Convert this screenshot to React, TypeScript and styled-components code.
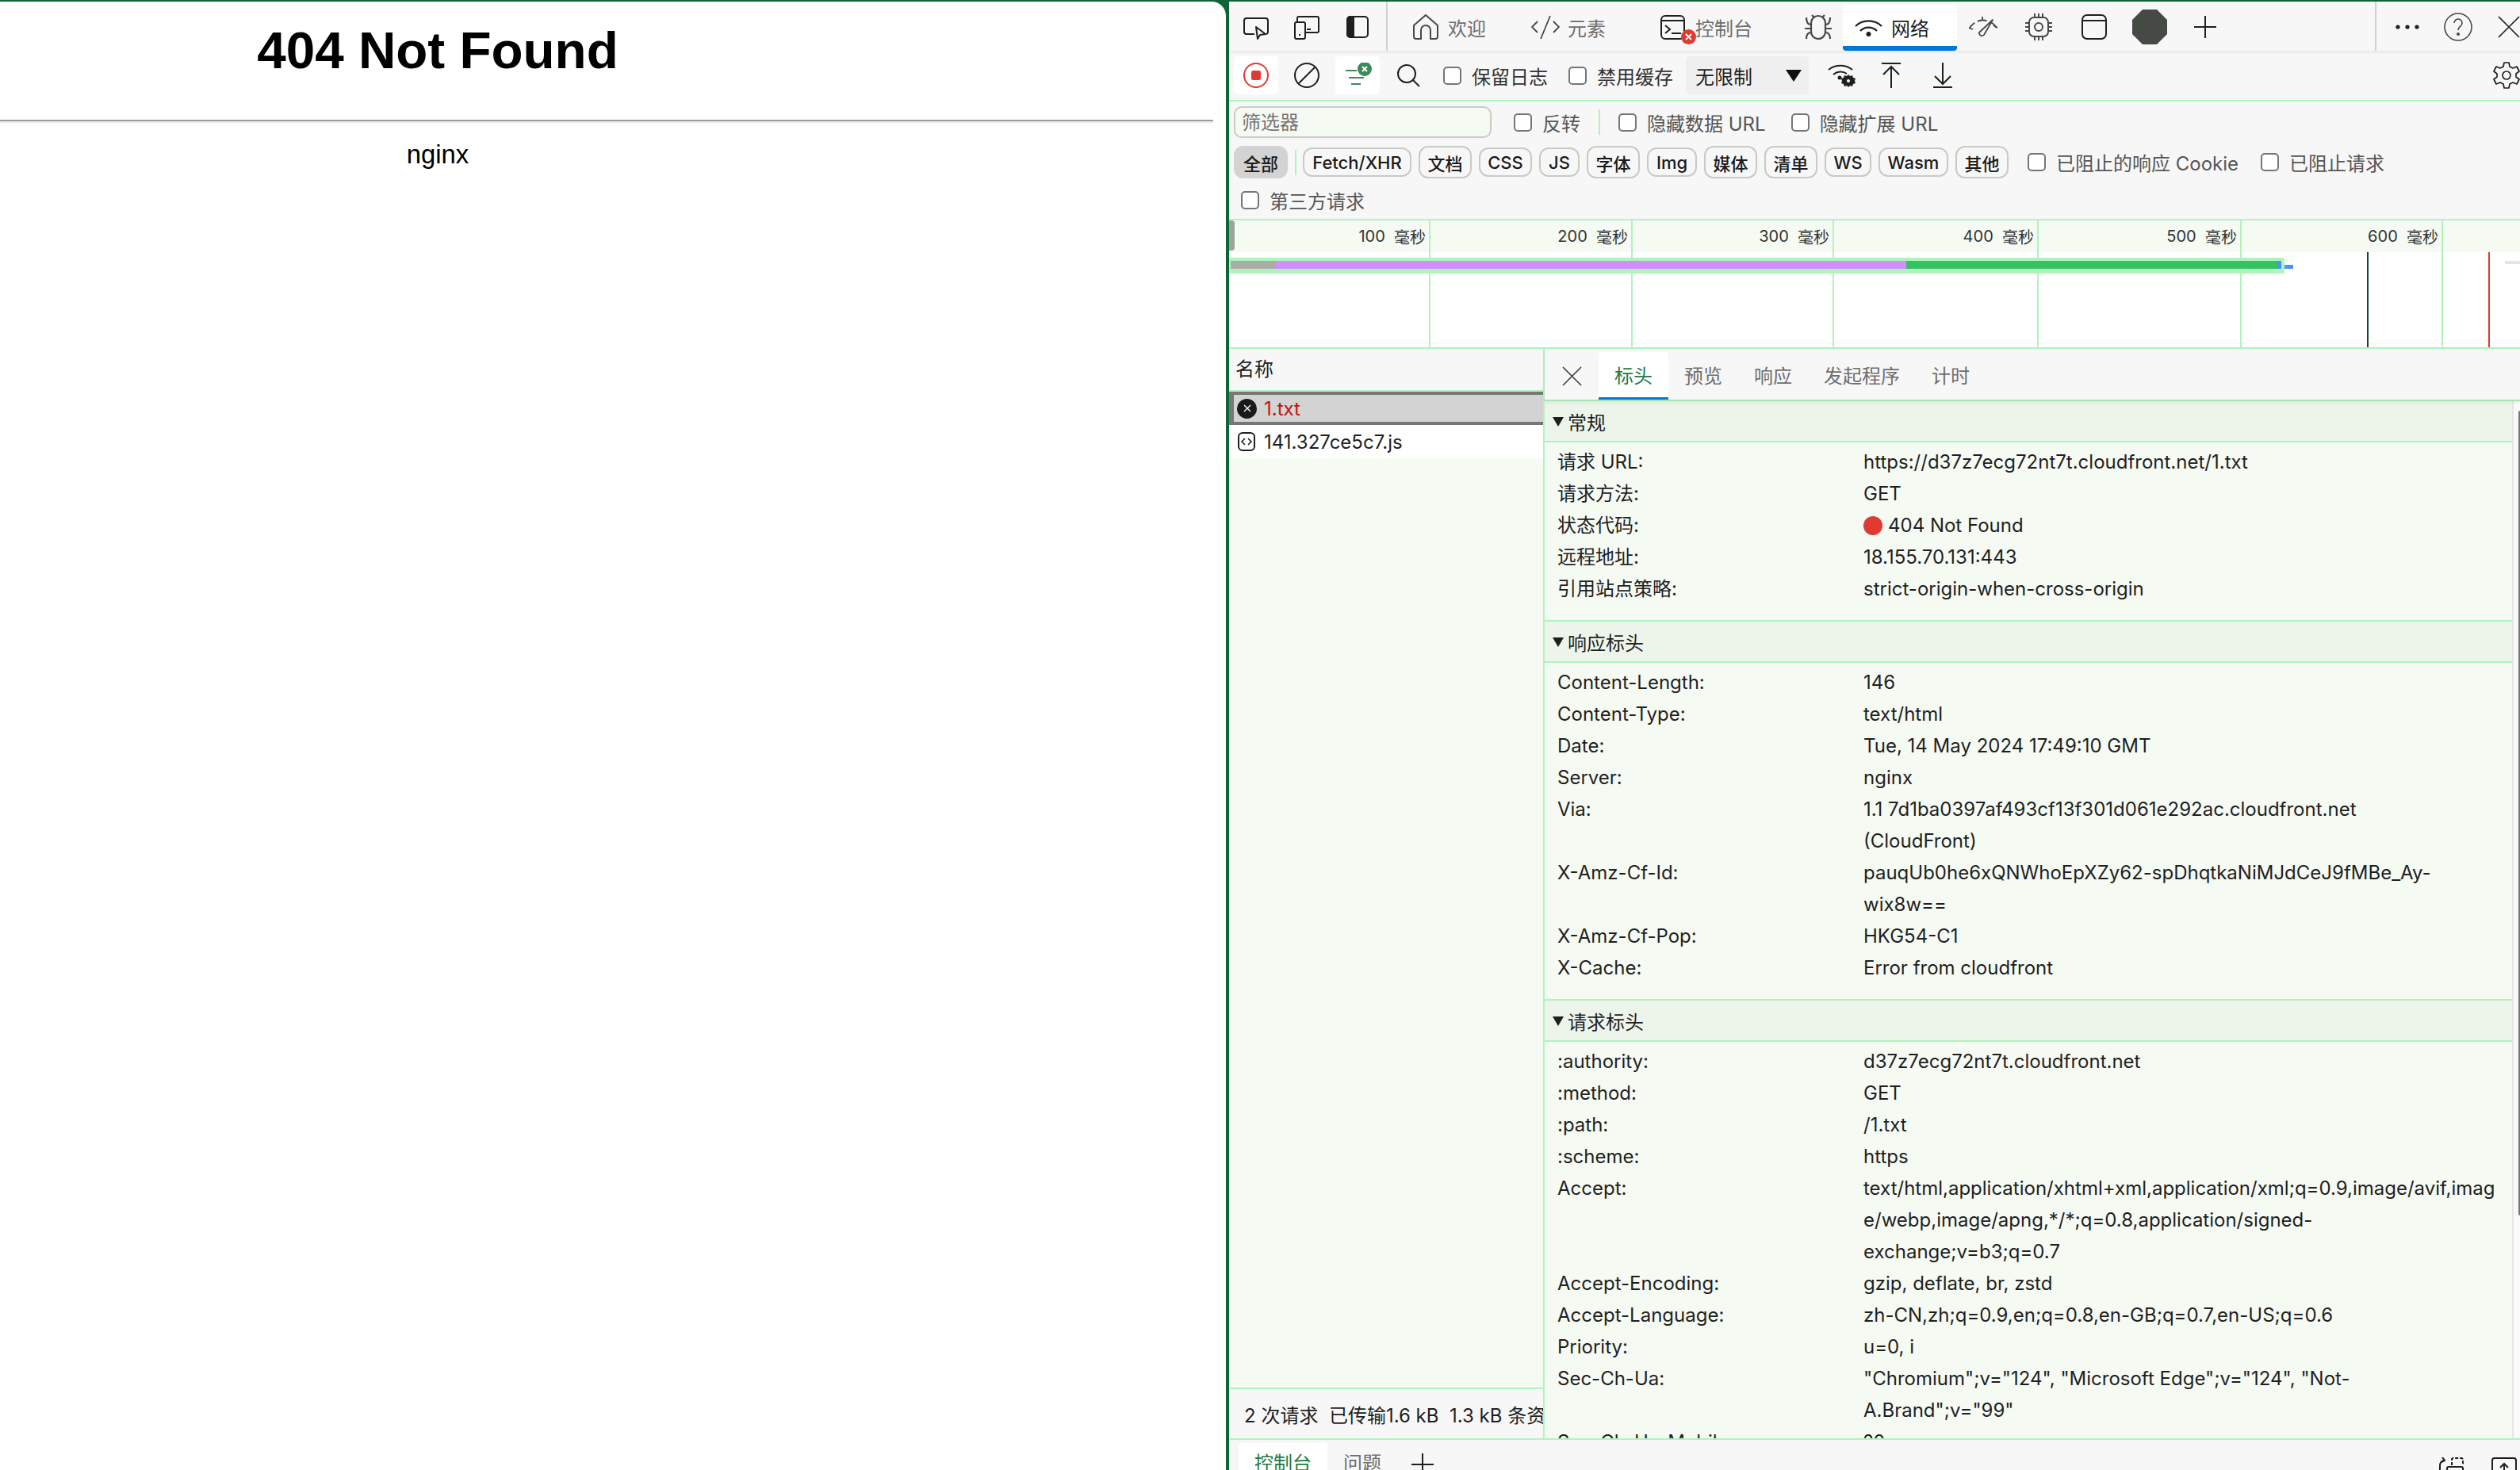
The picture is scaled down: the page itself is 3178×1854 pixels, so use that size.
import React from 'react';
import styled, { createGlobalStyle } from 'styled-components';

const SANS = '"Inter", "Noto Sans CJK SC", sans-serif';
const GREEN_LINE = '#aef4bc';
const PANE_BG = '#f5faf3';
const TOOLBAR_BG = '#f7f7f7';

const GlobalStyle = createGlobalStyle`
  html, body {
    margin: 0;
    padding: 0;
    background: #0f6435;
  }
  * {
    box-sizing: border-box;
  }
`;

function Icon ({ w, h, children, sw = 2 }: { w: number, h: number, children: React.ReactNode, sw?: number }) {
  return (
    <svg width={w} height={h} viewBox={`0 0 ${w} ${h}`} fill='none' stroke='currentColor' strokeWidth={sw} style={{ flex: 'none', display: 'block' }}>
      {children}
    </svg>
  );
}

const InspectIcon = () => (
  <Icon w={32} h={28}>
    <path d='M14 21H4a3 3 0 0 1-3-3V4a3 3 0 0 1 3-3h24a3 3 0 0 1 3 3v14a3 3 0 0 1-2 3' />
    <path d='M16 12l12 9-7 1-3 5z' strokeLinejoin='round' />
  </Icon>
);
const DeviceIcon = () => (
  <Icon w={32} h={30}>
    <path d='M4 7V3a2 2 0 0 1 2-2h23a2 2 0 0 1 2 2v16a2 2 0 0 1-2 2H15' />
    <rect x='1' y='8' width='13' height='21' rx='2' />
    <path d='M6 24h2M16 17h5' />
  </Icon>
);
const SidebarIcon = () => (
  <Icon w={28} h={28}>
    <rect x='1' y='1' width='26' height='26' rx='4' />
    <path d='M1 5a4 4 0 0 1 4-4h4v26H5a4 4 0 0 1-4-4z' fill='currentColor' />
  </Icon>
);
const HomeIcon = () => (
  <Icon w={32} h={33}>
    <path d='M1 14L16 1l15 13v14a3 3 0 0 1-3 3h-6V20a6 6 0 0 0-12 0v11H4a3 3 0 0 1-3-3z' strokeLinejoin='round' />
  </Icon>
);
const CodeIcon = () => (
  <Icon w={36} h={31} sw={1.8}>
    <path d='M8 8L1 15l7 7M28 8l7 7-7 7M24 1L12 30' />
  </Icon>
);
const ConsoleIcon = () => (
  <Icon w={32} h={31}>
    <rect x='1' y='1' width='29' height='29' rx='5' />
    <path d='M1 7h29M6 13l6 5-6 5M14 23h12' />
  </Icon>
);
const BugIcon = () => (
  <Icon w={34} h={32} sw={2.2}>
    <path d='M8 11a9 9 0 0 1 18 0v11a9 9 0 0 1-18 0z' />
    <path d='M12 4L9 1M22 4l3-3M8 13C4 13 2 10 2 4M26 13c4 0 6-3 6-9M8 18H0M26 18h8M8 23c-4 0-6 3-6 8M26 23c4 0 6 3 6 8' />
  </Icon>
);
const WifiIcon = () => (
  <Icon w={35} h={24} sw={2.2}>
    <path d='M1 11a24 24 0 0 1 33 0M7 17a15 15 0 0 1 21 0' />
    <circle cx='17.5' cy='21' r='3' fill='currentColor' stroke='none' />
  </Icon>
);
const GaugeIcon = () => (
  <Icon w={38} h={26} sw={1.8}>
    <path d='M2 14A20 20 0 0 1 36 14' strokeDasharray='9 4 12 4 30' />
    <path d='M31 4L20 23a3.500 3.500 0 0 1-6-3z' strokeLinejoin='round' />
    <path d='M18 0v5M1 14l5 2M37 14l-5-3' />
  </Icon>
);
const ChipIcon = () => (
  <Icon w={36} h={36}>
    <rect x='6' y='6' width='24' height='24' rx='6' />
    <circle cx='18' cy='18' r='5' />
    <path d='M13 1v5M18 1v5M23 1v5M13 30v5M18 30v5M23 30v5M1 13h5M1 18h5M1 23h5M30 13h5M30 18h5M30 23h5' />
  </Icon>
);
const WindowIcon = () => (
  <Icon w={32} h={32}>
    <rect x='1' y='1' width='30' height='30' rx='6' />
    <path d='M1 8h30' />
  </Icon>
);
const Octagon = () => (
  <svg width={44} height={44} viewBox='0 0 44 44' style={{ flex: 'none', display: 'block' }}>
    <path d='M13 0h18l13 13v18L31 44H13L0 31V13z' fill='#464a45' />
  </svg>
);
const PlusIcon = ({ s = 28 }: { s?: number }) => (
  <Icon w={s} h={s}>
    <path d={`M${s / 2} 0v${s}M0 ${s / 2}h${s}`} />
  </Icon>
);
const DotsIcon = () => (
  <svg width={30} height={6} viewBox='0 0 30 6' fill='currentColor' style={{ flex: 'none', display: 'block' }}>
    <circle cx='3' cy='3' r='2.6' /><circle cx='15' cy='3' r='2.6' /><circle cx='27' cy='3' r='2.6' />
  </svg>
);
const HelpIcon = () => (
  <Icon w={36} h={36} sw={1.6}>
    <circle cx='18' cy='18' r='17' />
    <path d='M13 13a5 5 0 1 1 8 4c-2 1.500-3 2.500-3 5' />
    <circle cx='18' cy='27' r='1.200' fill='currentColor' />
  </Icon>
);
const CloseIcon = ({ s = 28 }: { s?: number }) => (
  <Icon w={s} h={s} sw={1.7}>
    <path d={`M1 1L${s - 1} ${s - 1}M${s - 1} 1L1 ${s - 1}`} />
  </Icon>
);
const RecordIcon = () => (
  <svg width={32} height={32} viewBox='0 0 32 32' style={{ display: 'block' }}>
    <circle cx='16' cy='16' r='15' fill='none' stroke='#e03a32' strokeWidth='2' />
    <rect x='10' y='10' width='12' height='12' rx='2.500' fill='#e03a32' />
  </svg>
);
const ClearIcon = () => (
  <Icon w={32} h={32}>
    <circle cx='16' cy='16' r='15' />
    <path d='M27 5L5 27' />
  </Icon>
);
const FilterIcon = () => (
  <svg width={46} height={32} viewBox='0 0 46 32' style={{ display: 'block' }}>
    <path d='M8 10h14M12 19h19M15 27h12' stroke='#3a8a5a' strokeWidth='2' fill='none' />
    <circle cx='32' cy='8' r='9' fill='#3a8a5a' />
    <path d='M29 5l6 6M35 5l-6 6' stroke='#fff' strokeWidth='2' />
  </svg>
);
const SearchIcon = () => (
  <Icon w={29} h={29}>
    <circle cx='12' cy='12' r='11' />
    <path d='M20 20l8 8' />
  </Icon>
);
const WifiGearIcon = () => (
  <svg width={35} height={32} viewBox='0 0 35 32' fill='none' stroke='currentColor' strokeWidth='2' style={{ flex: 'none', display: 'block' }}>
    <path d='M1 9a24 24 0 0 1 30 0M7 15a14 14 0 0 1 17-1' />
    <circle cx='15' cy='19' r='2.500' fill='currentColor' stroke='none' />
    <path d='M26 15l2 2 3-1 1 3 3 1-1 3 1 3-3 1-1 3-3-1-2 2-2-2-3 1-1-3-3-1 1-3-1-3 3-1 1-3 3 1z' fill='currentColor' stroke='none' />
    <circle cx='26' cy='23' r='2' fill='#f7f7f7' stroke='none' />
  </svg>
);
const UploadIcon = () => (
  <Icon w={24} h={32}>
    <path d='M0 1h24M12 32V5M2 15L12 5l10 10' />
  </Icon>
);
const DownloadIcon = () => (
  <Icon w={24} h={32}>
    <path d='M0 31h24M12 0v27M2 17l10 10 10-10' />
  </Icon>
);
const GearIcon = () => (
  <Icon w={34} h={34} sw={1.7}>
    <path d='M14 1h6l1 5 4 2 5-2 3 6-4 3v4l4 3-3 6-5-2-4 2-1 5h-6l-1-5-4-2-5 2-3-6 4-3v-4L1 12l3-6 5 2 4-2z' strokeLinejoin='round' />
    <circle cx='17' cy='17' r='5' />
  </Icon>
);
const FileIcon = () => (
  <Icon w={22} h={24}>
    <rect x='1' y='1' width='20' height='22' rx='5' />
    <path d='M9 8l-4 4 4 4M13 8l4 4-4 4' strokeWidth='1.600' />
  </Icon>
);
const DockIcon = () => (
  <Icon w={32} h={16}>
    <path d='M7 4a7 7 0 0 0-5 7v5M5 0l3 4-4 2' />
    <path d='M17 10V3a2 2 0 0 1 2-2h10a2 2 0 0 1 2 2v7' strokeDasharray='4 2' />
    <path d='M11 16v-2a2 2 0 0 1 2-2h16a2 2 0 0 1 2 2v2' />
  </Icon>
);
const ScreenIcon = () => (
  <Icon w={32} h={16}>
    <path d='M1 16V4a3 3 0 0 1 3-3h24a3 3 0 0 1 3 3v12M16 16V8M11 13l5-5 5 5' />
  </Icon>
);

const PILLS = [
  { label: '全部', w: 68, active: true, cjk: true },
  { label: 'Fetch/XHR', w: 137 },
  { label: '文档', w: 67, cjk: true },
  { label: 'CSS', w: 67 },
  { label: 'JS', w: 51 },
  { label: '字体', w: 67, cjk: true },
  { label: 'Img', w: 63 },
  { label: '媒体', w: 67, cjk: true },
  { label: '清单', w: 67, cjk: true },
  { label: 'WS', w: 59 },
  { label: 'Wasm', w: 88 },
  { label: '其他', w: 67, cjk: true }
];

const SECTIONS = [
  {
    title: '常规',
    rows: [
      ['请求 URL:', 'https://d37z7ecg72nt7t.cloudfront.net/1.txt'],
      ['请求方法:', 'GET'],
      ['状态代码:', '404 Not Found', 'status'],
      ['远程地址:', '18.155.70.131:443'],
      ['引用站点策略:', 'strict-origin-when-cross-origin']
    ]
  },
  {
    title: '响应标头',
    rows: [
      ['Content-Length:', '146'],
      ['Content-Type:', 'text/html'],
      ['Date:', 'Tue, 14 May 2024 17:49:10 GMT'],
      ['Server:', 'nginx'],
      ['Via:', '1.1 7d1ba0397af493cf13f301d061e292ac.cloudfront.net\n(CloudFront)'],
      ['X-Amz-Cf-Id:', 'pauqUb0he6xQNWhoEpXZy62-spDhqtkaNiMJdCeJ9fMBe_Ay-\nwix8w=='],
      ['X-Amz-Cf-Pop:', 'HKG54-C1'],
      ['X-Cache:', 'Error from cloudfront']
    ]
  },
  {
    title: '请求标头',
    rows: [
      [':authority:', 'd37z7ecg72nt7t.cloudfront.net'],
      [':method:', 'GET'],
      [':path:', '/1.txt'],
      [':scheme:', 'https'],
      ['Accept:', 'text/html,application/xhtml+xml,application/xml;q=0.9,image/avif,imag\ne/webp,image/apng,*/*;q=0.8,application/signed-\nexchange;v=b3;q=0.7'],
      ['Accept-Encoding:', 'gzip, deflate, br, zstd'],
      ['Accept-Language:', 'zh-CN,zh;q=0.9,en;q=0.8,en-GB;q=0.7,en-US;q=0.6'],
      ['Priority:', 'u=0, i'],
      ['Sec-Ch-Ua:', '"Chromium";v="124", "Microsoft Edge";v="124", "Not-\nA.Brand";v="99"'],
      ['Sec-Ch-Ua-Mobile:', '?0']
    ]
  }
];

const TICKS = [
  { label: '100', w: 254 },
  { label: '200', w: 255 },
  { label: '300', w: 254 },
  { label: '400', w: 258 },
  { label: '500', w: 256 },
  { label: '600', w: 254 }
];

export default function App () {
  return (
    <Screen>
      <GlobalStyle />

      <Page>
        <Heading>404 Not Found</Heading>
        <Rule />
        <Footer>nginx</Footer>
      </Page>

      <DevTools>
        <MainTabs>
          <IconCell $mt={4}><InspectIcon /></IconCell>
          <IconCell $mt={2}><DeviceIcon /></IconCell>
          <IconCell><SidebarIcon /></IconCell>
          <VLine $ml={4} />
          <MainTab $ml={32}><HomeIcon />欢迎</MainTab>
          <MainTab $ml={57} $gap={10}><CodeIcon />元素</MainTab>
          <MainTab $ml={69} $dark>
            <ConsoleIcon />
            <ErrorBadge>
              <svg width={9} height={9} viewBox='0 0 9 9'><path d='M1 1l7 7M8 1L1 8' stroke='#fff' strokeWidth='1.800' /></svg>
            </ErrorBadge>
            控制台
          </MainTab>
          <MainTab $ml={66}><BugIcon /></MainTab>
          <NetworkTab><WifiIcon />网络</NetworkTab>
          <MainTab $ml={14}><GaugeIcon /></MainTab>
          <MainTab $ml={33}><ChipIcon /></MainTab>
          <MainTab $ml={36} $dark><WindowIcon /></MainTab>
          <MainTab $ml={32}><Octagon /></MainTab>
          <MainTab $ml={34} $dark><PlusIcon /></MainTab>
          <Spacer />
          <VLine />
          <MainTab $ml={24} $dark><DotsIcon /></MainTab>
          <MainTab $ml={31}><HelpIcon /></MainTab>
          <MainTab $ml={32} $dark><CloseIcon /></MainTab>
        </MainTabs>

        <Toolbar>
          <ToolButton $on $ml={6}><RecordIcon /></ToolButton>
          <ToolButton $ml={20} $w={32}><ClearIcon /></ToolButton>
          <ToolButton $on $ml={20}><FilterIcon /></ToolButton>
          <ToolButton $ml={22} $w={29}><SearchIcon /></ToolButton>
          <CheckLabel $ml={29} $dark><Check type='checkbox' readOnly />保留日志</CheckLabel>
          <CheckLabel $ml={26} $dark><Check type='checkbox' readOnly />禁用缓存</CheckLabel>
          <Throttle>无限制<Caret /></Throttle>
          <ToolButton $ml={24} $w={35}><WifiGearIcon /></ToolButton>
          <ToolButton $ml={33} $w={24}><UploadIcon /></ToolButton>
          <ToolButton $ml={41} $w={24}><DownloadIcon /></ToolButton>
          <Spacer />
          <GearIcon />
        </Toolbar>

        <FilterBar>
          <FilterRow>
            <FilterInput placeholder='筛选器' readOnly />
            <CheckLabel $ml={28}><Check type='checkbox' readOnly />反转</CheckLabel>
            <GreenSep $ml={23} $h={32} />
            <CheckLabel $ml={23}><Check type='checkbox' readOnly />隐藏数据 URL</CheckLabel>
            <CheckLabel $ml={32}><Check type='checkbox' readOnly />隐藏扩展 URL</CheckLabel>
          </FilterRow>

          <PillRow>
            {PILLS.map((pill, i) => (
              <React.Fragment key={pill.label}>
                <Pill $active={pill.active} $cjk={pill.cjk} $w={pill.w}>{pill.label}</Pill>
                {i === 0 && <GreenSep $ml={0} $h={32} />}
              </React.Fragment>
            ))}
            <CheckLabel $ml={15}><Check type='checkbox' readOnly />已阻止的响应 Cookie</CheckLabel>
            <CheckLabel $ml={20}><Check type='checkbox' readOnly />已阻止请求</CheckLabel>
          </PillRow>

          <ThirdPartyRow>
            <CheckLabel><Check type='checkbox' readOnly />第三方请求</CheckLabel>
          </ThirdPartyRow>
        </FilterBar>

        <Timeline>
          <Handle />
          <TickRow>
            {TICKS.map(tick => (
              <Tick key={tick.label} $w={tick.w}>
                <span>{tick.label}</span>&nbsp;&nbsp;毫秒
              </Tick>
            ))}
          </TickRow>
          <svg width={1628} height={120} viewBox='0 0 1628 120' style={{ display: 'block', background: '#fff' }}>
            {[253, 508, 762, 1020, 1276, 1530].map(x => (
              <rect key={x} x={x - 1} y={0} width={2} height={120} fill={GREEN_LINE} />
            ))}
            <rect x={1435} y={0} width={2} height={120} fill='#0a4a24' />
            <rect x={1588} y={0} width={2} height={120} fill='#e03a32' />
            <rect x={0} y={7} width={1331} height={20} fill={GREEN_LINE} />
            <rect x={2} y={11} width={56} height={10} fill='#a9ada5' />
            <rect x={58} y={11} width={796} height={10} fill='#d08eff' />
            <rect x={854} y={11} width={469} height={10} fill='#38c163' />
            <rect x={1323} y={11} width={4} height={10} fill='#4d90fe' />
            <rect x={1331} y={16} width={11} height={5} fill='#4d90fe' />
            <rect x={1609} y={11} width={19} height={4} fill='#e0e8dc' />
          </svg>
        </Timeline>

        <Split>
          <NameColumn>
            <NameHeader>名称</NameHeader>
            <SelectedRow>
              <ErrorDot>
                <svg width={10} height={10} viewBox='0 0 10 10'><path d='M1 1l8 8M9 1L1 9' stroke='#fff' strokeWidth='1.300' /></svg>
              </ErrorDot>
              <ErrorName>1.txt</ErrorName>
            </SelectedRow>
            <FileRow><FileIcon /><span>141.327ce5c7.js</span></FileRow>
            <NameFill />
            <StatusBar>2 次请求&nbsp;&nbsp;已传输1.6 kB&nbsp;&nbsp;1.3 kB 条资源</StatusBar>
          </NameColumn>

          <DetailPane>
            <DetailTabs>
              <DetailClose><CloseIcon s={25} /></DetailClose>
              <DetailTab $active>标头</DetailTab>
              <DetailTab>预览</DetailTab>
              <DetailTab>响应</DetailTab>
              <DetailTab>发起程序</DetailTab>
              <DetailTab>计时</DetailTab>
            </DetailTabs>
            <DetailBody>
              <Sections>
                {SECTIONS.map(section => (
                  <Section key={section.title}>
                    <SectionHeader><Triangle />{section.title}</SectionHeader>
                    <SectionRows>
                      {section.rows.map(([name, value, kind]) => (
                        <Row key={name}>
                          <RowName>{name}</RowName>
                          <RowValue>
                            {kind === 'status' && <StatusDot />}
                            {value}
                          </RowValue>
                        </Row>
                      ))}
                    </SectionRows>
                  </Section>
                ))}
              </Sections>
              <Scrollbar><ScrollThumb /></Scrollbar>
            </DetailBody>
          </DetailPane>
        </Split>

        <Drawer>
          <DrawerTab $active>控制台</DrawerTab>
          <DrawerTab>问题</DrawerTab>
          <DrawerPlus><PlusIcon /></DrawerPlus>
          <Spacer />
          <DrawerDock><DockIcon /></DrawerDock>
          <DrawerScreen><ScreenIcon /></DrawerScreen>
        </Drawer>
      </DevTools>
    </Screen>
  );
}

const Screen = styled.div`
  width: 3178px;
  height: 1854px;
  padding-top: 2px;
  display: flex;
  overflow: hidden;
  background: #0f6435;
  font-family: ${SANS};
  font-size: 24px;
  color: #1f1f1f;
`;

const Page = styled.div`
  flex: 0 0 1546px;
  background: #fff;
  border-top-right-radius: 18px;
  font-family: "Liberation Sans", Arial, sans-serif;
  color: #000;
`;

const Heading = styled.h1`
  width: 1104px;
  margin: 25px 0 0;
  text-align: center;
  font-size: 65.6px;
  line-height: 74px;
  font-weight: 700;
`;

const Rule = styled.hr`
  width: 1530px;
  height: 4px;
  margin: 50px 0 0;
  border: 0;
  border-top: 2px solid #9a9a9a;
  border-bottom: 2px solid #eee;
`;

const Footer = styled.div`
  width: 1104px;
  margin-top: 21px;
  text-align: center;
  font-size: 32.8px;
  line-height: 37px;
`;

const DevTools = styled.div`
  flex: 0 0 1628px;
  margin-left: 4px;
  display: flex;
  flex-direction: column;
  min-height: 0;
  background: ${TOOLBAR_BG};
`;

const MainTabs = styled.div`
  flex: 0 0 62px;
  padding-top: 2px;
  display: flex;
  align-items: center;
  color: #1f1f1f;
  box-shadow: 0 2px 4px rgba(0, 0, 0, .08);
  position: relative;
`;

const IconCell = styled.div<{ $mt?: number }>`
  flex: 0 0 64px;
  margin-top: ${p => p.$mt || 0}px;
  display: flex;
  justify-content: center;
  &:first-child {
    margin-left: 2px;
  }
`;

const VLine = styled.div<{ $ml?: number }>`
  flex: none;
  align-self: stretch;
  width: 2px;
  margin: -2px 0 0 ${p => p.$ml || 0}px;
  background: #cfcfd6;
`;

const MainTab = styled.div<{ $ml: number, $gap?: number, $dark?: boolean }>`
  flex: none;
  position: relative;
  display: flex;
  align-items: center;
  gap: ${p => p.$gap || 12}px;
  margin-left: ${p => p.$ml}px;
  color: #6e6e6e;
  & > svg {
    color: ${p => p.$dark ? '#1f1f1f' : '#484848'};
  }
`;

const ErrorBadge = styled.span`
  position: absolute;
  left: 26px;
  top: 20px;
  width: 19px;
  height: 19px;
  display: flex;
  align-items: center;
  justify-content: center;
  border-radius: 50%;
  background: #e03a32;
`;

const NetworkTab = styled.div`
  flex: none;
  align-self: flex-end;
  height: 58px;
  width: 144px;
  margin-left: 14px;
  padding: 4px 0 0 15px;
  display: flex;
  align-items: center;
  gap: 11px;
  background: #fff;
  border-bottom: 6px solid #0078d4;
  border-radius: 4px;
  color: #1f1f1f;
`;

const Spacer = styled.div`
  flex: 1;
`;

const Toolbar = styled.div`
  flex: 0 0 64px;
  display: flex;
  align-items: center;
  border-bottom: 2px solid ${GREEN_LINE};
`;

const ToolButton = styled.div<{ $on?: boolean, $ml: number, $w?: number }>`
  flex: none;
  width: ${p => p.$w || 56}px;
  height: 48px;
  margin-left: ${p => p.$ml}px;
  display: flex;
  align-items: center;
  justify-content: center;
  border-radius: 5px;
  background: ${p => p.$on ? '#fff' : 'transparent'};
`;

const CheckLabel = styled.label<{ $ml?: number, $dark?: boolean }>`
  flex: none;
  display: flex;
  align-items: center;
  gap: 13px;
  margin-left: ${p => p.$ml || 0}px;
  color: ${p => p.$dark ? '#333' : '#555'};
  white-space: nowrap;
`;

const Check = styled.input`
  appearance: none;
  flex: none;
  width: 23px;
  height: 23px;
  margin: 0;
  border: 2px solid #767676;
  border-radius: 5px;
  background: #fff;
`;

const Throttle = styled.div`
  flex: none;
  width: 155px;
  height: 48px;
  margin-left: 16px;
  padding: 0 9px 0 12px;
  display: flex;
  align-items: center;
  justify-content: space-between;
  border-radius: 5px;
  background: #efefef;
`;

const Caret = styled.span`
  width: 0;
  height: 0;
  border-left: 10.5px solid transparent;
  border-right: 10.5px solid transparent;
  border-top: 15px solid #111;
`;

const FilterBar = styled.div`
  flex: 0 0 150px;
  display: flex;
  flex-direction: column;
  border-bottom: 2px solid ${GREEN_LINE};
`;

const FilterRow = styled.div`
  flex: 0 0 52px;
  padding-left: 6px;
  display: flex;
  align-items: center;
`;

const FilterInput = styled.input`
  flex: none;
  width: 325px;
  height: 40px;
  padding: 0 8px;
  border: 2px solid #c8ccc4;
  border-radius: 10px;
  background: ${PANE_BG};
  font: inherit;
  &::placeholder {
    color: #757575;
  }
`;

const GreenSep = styled.div<{ $ml: number, $h: number }>`
  flex: none;
  width: 2px;
  height: ${p => p.$h}px;
  margin-left: ${p => p.$ml}px;
  background: ${GREEN_LINE};
`;

const PillRow = styled.div`
  flex: 0 0 41px;
  margin-top: 4px;
  padding-left: 6px;
  display: flex;
  align-items: center;
  gap: 8px;
`;

const Pill = styled.div<{ $active?: boolean, $cjk?: boolean, $w: number }>`
  flex: none;
  width: ${p => p.$w}px;
  height: ${p => p.$cjk ? 41 : 37}px;
  margin-right: 1px;
  display: flex;
  align-items: center;
  justify-content: center;
  border: 2px solid ${p => p.$active ? '#d3d3d3' : '#c8cbc3'};
  border-radius: 12px;
  background: ${p => p.$active ? '#d3d3d3' : 'transparent'};
  color: #1a1a1a;
  font-size: 22px;
  font-weight: 500;
  white-space: nowrap;
`;

const ThirdPartyRow = styled.div`
  flex: 1;
  padding: 3px 0 0 15px;
  display: flex;
  align-items: center;
`;

const Timeline = styled.div`
  flex: none;
  position: relative;
  border-bottom: 2px solid ${GREEN_LINE};
`;

const Handle = styled.div`
  position: absolute;
  left: 0;
  top: 0;
  width: 7px;
  height: 38px;
  border-radius: 0 4px 4px 0;
  background: #9aa69c;
`;

const TickRow = styled.div`
  height: 40px;
  display: flex;
  background: ${PANE_BG};
`;

const Tick = styled.div<{ $w: number }>`
  flex: 0 0 ${p => p.$w}px;
  padding-right: 4px;
  display: flex;
  align-items: center;
  justify-content: flex-end;
  border-right: 2px solid ${GREEN_LINE};
  font-size: 20px;
  color: #333;
`;

const Split = styled.div`
  flex: 1;
  min-height: 0;
  display: flex;
  border-bottom: 2px solid ${GREEN_LINE};
`;

const NameColumn = styled.div`
  flex: 0 0 398px;
  min-width: 0;
  display: flex;
  flex-direction: column;
  border-right: 2px solid ${GREEN_LINE};
`;

const NameHeader = styled.div`
  flex: 0 0 54px;
  padding: 0 0 5px 8px;
  display: flex;
  align-items: center;
  border-bottom: 2px solid ${GREEN_LINE};
`;

const SelectedRow = styled.div`
  flex: 0 0 42px;
  padding-left: 4px;
  display: flex;
  align-items: center;
  gap: 9px;
  border: solid #777;
  border-width: 4px 0 4px 6px;
  background: #d3d3d3;
`;

const ErrorDot = styled.span`
  flex: none;
  width: 25px;
  height: 25px;
  display: flex;
  align-items: center;
  justify-content: center;
  border-radius: 50%;
  background: #1a1a1a;
`;

const ErrorName = styled.span`
  color: #c5120f;
`;

const FileRow = styled.div`
  flex: 0 0 42px;
  padding-left: 11px;
  display: flex;
  align-items: center;
  gap: 11px;
  background: #fff;
`;

const NameFill = styled.div`
  flex: 1;
  background: ${PANE_BG};
`;

const StatusBar = styled.div`
  flex: 0 0 64px;
  padding: 0 0 0 19px;
  display: flex;
  align-items: center;
  border-top: 2px solid ${GREEN_LINE};
  white-space: nowrap;
  overflow: hidden;
`;

const DetailPane = styled.div`
  flex: 1;
  min-width: 0;
  display: flex;
  flex-direction: column;
`;

const DetailTabs = styled.div`
  flex: 0 0 66px;
  display: flex;
  align-items: flex-end;
  border-bottom: 2px solid #a8e4b4;
  box-shadow: 0 2px 4px rgba(0, 0, 0, .06);
  position: relative;
`;

const DetailClose = styled.div`
  flex: none;
  width: 68px;
  height: 60px;
  padding-left: 22px;
  display: flex;
  align-items: center;
  color: #444;
`;

const DetailTab = styled.div<{ $active?: boolean }>`
  flex: none;
  height: 60px;
  padding: 0 20px;
  display: flex;
  align-items: center;
  border-radius: 4px 4px 0 0;
  background: ${p => p.$active ? '#fff' : 'transparent'};
  border-bottom: 3px solid ${p => p.$active ? '#0078d4' : 'transparent'};
  color: ${p => p.$active ? '#1f7a44' : '#6e6e6e'};
`;

const DetailBody = styled.div`
  flex: 1;
  min-height: 0;
  display: flex;
  overflow: hidden;
`;

const Sections = styled.div`
  flex: 1;
  min-width: 0;
  background: ${PANE_BG};
`;

const Section = styled.section`
  &:not(:last-child) {
    border-bottom: 2px solid ${GREEN_LINE};
  }
`;

const SectionHeader = styled.div`
  height: 52px;
  padding-left: 10px;
  display: flex;
  align-items: center;
  gap: 5px;
  border-bottom: 2px solid ${GREEN_LINE};
  background: #edf5eb;
`;

const Triangle = styled.span`
  width: 0;
  height: 0;
  margin-top: 2px;
  border-left: 7px solid transparent;
  border-right: 7px solid transparent;
  border-top: 12px solid #1f1f1f;
`;

const SectionRows = styled.div`
  padding: 5px 0 19px 16px;
`;

const Row = styled.div`
  display: flex;
  line-height: 40px;
`;

const RowName = styled.div`
  flex: 0 0 386px;
`;

const RowValue = styled.div`
  flex: 1;
  white-space: pre-line;
`;

const StatusDot = styled.span`
  display: inline-block;
  width: 24px;
  height: 24px;
  margin-right: 7px;
  vertical-align: -4px;
  border-radius: 50%;
  background: #e03a32;
`;

const Scrollbar = styled.div`
  flex: 0 0 10px;
  padding-top: 12px;
  display: flex;
  justify-content: flex-end;
  border-left: 2px solid #e6e6e6;
  background: #fafafa;
`;

const ScrollThumb = styled.div`
  width: 2px;
  height: 1015px;
  border-radius: 2px 0 0 2px;
  background: #777;
`;

const Drawer = styled.div`
  flex: 0 0 38px;
  min-height: 0;
  overflow: hidden;
  padding: 4px 0 0 12px;
  display: flex;
  align-items: flex-start;
`;

const DrawerTab = styled.div<{ $active?: boolean }>`
  flex: none;
  height: 50px;
  padding: 10px 20px 0;
  line-height: 32px;
  border-radius: 4px 4px 0 0;
  background: ${p => p.$active ? '#fff' : 'transparent'};
  color: ${p => p.$active ? '#1f7a44' : '#6e6e6e'};
`;

const DrawerPlus = styled.div`
  flex: none;
  margin: 13px 0 0 18px;
`;

const DrawerDock = styled.div`
  flex: none;
  margin-top: 18px;
`;

const DrawerScreen = styled.div`
  flex: none;
  width: 36px;
  margin: 18px 0 0 35px;
`;
